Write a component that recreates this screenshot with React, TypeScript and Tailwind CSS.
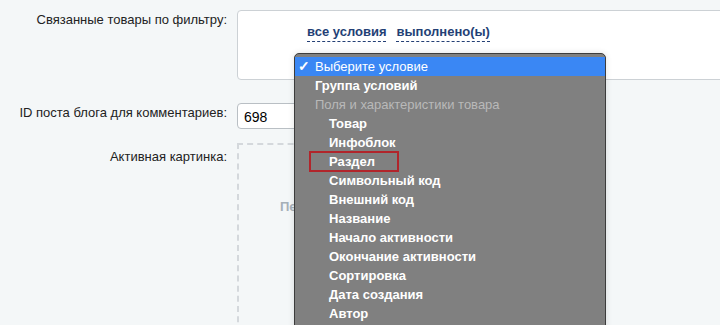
import React from "react";

const items: { label: string; kind: "selected" | "bold" | "group" | "sub" }[] = [
  { label: "Выберите условие", kind: "selected" },
  { label: "Группа условий", kind: "bold" },
  { label: "Поля и характеристики товара", kind: "group" },
  { label: "Товар", kind: "sub" },
  { label: "Инфоблок", kind: "sub" },
  { label: "Раздел", kind: "sub" },
  { label: "Символьный код", kind: "sub" },
  { label: "Внешний код", kind: "sub" },
  { label: "Название", kind: "sub" },
  { label: "Начало активности", kind: "sub" },
  { label: "Окончание активности", kind: "sub" },
  { label: "Сортировка", kind: "sub" },
  { label: "Дата создания", kind: "sub" },
  { label: "Автор", kind: "sub" },
];

export default function App() {
  return (
    <div
      className="relative w-[720px] h-[325px] overflow-hidden bg-[#f4f7f8] text-[13px] leading-[16px] text-[#000]"
      style={{ fontFamily: '"Liberation Sans", Arial, sans-serif' }}
    >
      <div className="pt-[10px] flex flex-col">
        {/* Row 1 */}
        <div className="flex">
          <div className="w-[237px] shrink-0 pr-[10px] pt-[2px] text-right text-[#222]">
            Связанные товары по фильтру:
          </div>
          <div className="h-[70px] w-[500px] shrink-0 rounded-[4px] border border-[#ccd1d5] bg-white pl-[69px] pt-[13px]">
            <div className="flex gap-[10px] font-bold text-[#243f75]">
              <span className="border-b border-dashed border-[#243f75] pb-[1px]">все условия</span>
              <span className="border-b border-dashed border-[#243f75] pb-[1px]">выполнено(ы)</span>
            </div>
          </div>
        </div>

        {/* Row 2 */}
        <div className="flex mt-[23px]">
          <div className="w-[237px] shrink-0 pr-[10px] pt-[2px] text-right text-[#222]">
            ID поста блога для комментариев:
          </div>
          <div className="h-[26px] w-[200px] shrink-0 rounded-[4px] border border-[#b9bfc4] bg-white pl-[6px] pt-[5px] text-[14px]">
            698
          </div>
        </div>

        {/* Row 3 */}
        <div className="flex mt-[14px]">
          <div className="w-[237px] shrink-0 pr-[10px] pt-[6px] text-right text-[#222]">
            Активная картинка:
          </div>
          <div className="h-[220px] w-[350px] shrink-0 border-2 border-dashed border-[#d4d8dc] pl-[41px] pt-[54px] font-bold text-[#a6b0b8]">
            Перетащите
          </div>
        </div>
      </div>

      {/* Dropdown menu overlay */}
      <div className="absolute left-[294px] top-[53px] w-[312px] h-[290px] rounded-t-[5px] border border-[#3c3c3c] bg-[#808080] pt-[3px] shadow-[0_0_6px_rgba(0,0,0,0.12)]">
        {items.map((it) => {
          if (it.kind === "selected") {
            return (
              <div key={it.label} className="relative h-[19px] bg-[#3a87f4] pl-[20px] pt-[2px] text-white">
                <span className="absolute left-[3px] top-[1px] font-bold text-[14px]">✓</span>
                {it.label}
              </div>
            );
          }
          if (it.kind === "bold") {
            return (
              <div key={it.label} className="h-[19px] pl-[20px] pt-[2px] font-bold text-white">
                {it.label}
              </div>
            );
          }
          if (it.kind === "group") {
            return (
              <div key={it.label} className="h-[19px] pl-[20px] pt-[2px] text-[#b9b9b9]">
                {it.label}
              </div>
            );
          }
          return (
            <div key={it.label} className="h-[19px] pl-[34px] pt-[2px] font-bold text-white">
              {it.label}
            </div>
          );
        })}
      </div>

      {/* Red annotation rectangle */}
      <div className="absolute left-[309px] top-[151px] w-[90px] h-[21px] border-2 border-[#b1252b]" />
    </div>
  );
}
